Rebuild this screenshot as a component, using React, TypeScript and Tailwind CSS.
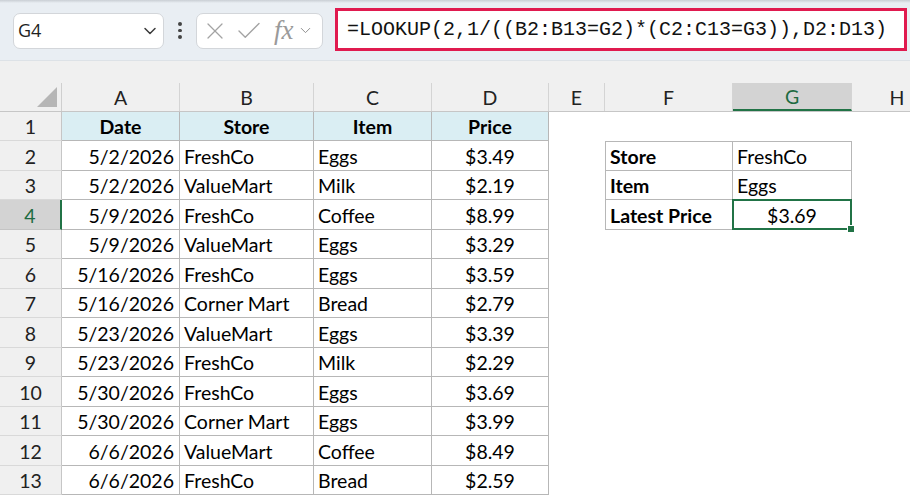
import React from "react";
import { ChevronDown, X, Check } from "lucide-react";

const COLS = [118, 134, 118, 117, 56, 128, 119, 90];
const LETTERS = ["A", "B", "C", "D", "E", "F", "G", "H"];

const DATA: string[][] = [
  ["5/2/2026", "FreshCo", "Eggs", "$3.49"],
  ["5/2/2026", "ValueMart", "Milk", "$2.19"],
  ["5/9/2026", "FreshCo", "Coffee", "$8.99"],
  ["5/9/2026", "ValueMart", "Eggs", "$3.29"],
  ["5/16/2026", "FreshCo", "Eggs", "$3.59"],
  ["5/16/2026", "Corner Mart", "Bread", "$2.79"],
  ["5/23/2026", "ValueMart", "Eggs", "$3.39"],
  ["5/23/2026", "FreshCo", "Milk", "$2.29"],
  ["5/30/2026", "FreshCo", "Eggs", "$3.69"],
  ["5/30/2026", "Corner Mart", "Eggs", "$3.99"],
  ["6/6/2026", "ValueMart", "Coffee", "$8.49"],
  ["6/6/2026", "FreshCo", "Bread", "$2.59"],
];

const LOOKUP: Record<number, [string, string]> = {
  2: ["Store", "FreshCo"],
  3: ["Item", "Eggs"],
  4: ["Latest Price", "$3.69"],
};

function rowHeight(r: number) {
  if (r === 1) return 29;
  return r % 2 === 0 ? 30 : 29;
}

function TopBar() {
  return (
    <div className="relative h-[61px] bg-[#e9eef3] border-b border-[#dde2e7]">
      <div className="absolute left-0 top-0 h-[3px] w-full bg-gradient-to-b from-[#c9ced4] to-[#e9eef3]" />
      <div className="flex h-full items-center pl-[13px] pt-[1px]">
        <div className="flex h-[36px] w-[151px] items-center justify-between rounded-[7px] border border-[#d3d6da] bg-white pl-[4px] pr-[3px]">
          <span className="text-[18px] text-[#1f1f1f]" style={{ fontFamily: "'Open Sans', sans-serif" }}>
            G4
          </span>
          <ChevronDown size={20} strokeWidth={1.8} className="text-[#3b3b3b]" />
        </div>
        <div className="flex w-[32px] flex-col items-center justify-center gap-[3px]">
          <span className="block h-[3.5px] w-[3.5px] rounded-full bg-[#444]" />
          <span className="block h-[3.5px] w-[3.5px] rounded-full bg-[#444]" />
          <span className="block h-[3.5px] w-[3.5px] rounded-full bg-[#444]" />
        </div>
        <div className="flex h-[36px] w-[127px] items-center rounded-[7px] border border-[#d3d6da] bg-white pl-[4px]">
          <X size={28} strokeWidth={1.1} className="text-[#a3a3a3]" />
          <Check size={30} strokeWidth={1.1} className="ml-[5px] text-[#a3a3a3]" />
          <span
            className="ml-[10px] text-[27px] italic leading-none text-[#9a9a9a]"
            style={{ fontFamily: "'Liberation Serif', serif" }}
          >
            fx
          </span>
          <ChevronDown size={17} strokeWidth={1.4} className="ml-[3px] text-[#8f8f8f]" />
        </div>
        <div className="ml-[12px] flex h-[43px] w-[572px] -translate-y-[1px] items-center border-[3px] border-[#e01a4f] bg-white pl-[9px]">
          <span
            className="text-[20px] text-[#111] whitespace-nowrap"
            style={{ fontFamily: "'Liberation Mono', monospace" }}
          >
            =LOOKUP(2,1/((B2:B13=G2)*(C2:C13=G3)),D2:D13)
          </span>
        </div>
      </div>
    </div>
  );
}

function ColumnHeader() {
  return (
    <div className="flex h-[29px] border-b border-[#c6c6c6] bg-[#f0f0f0]">
      <div className="relative w-[62px] shrink-0 border-r border-[#cfcfcf]">
        <svg className="absolute right-[4px] bottom-[4px]" width="20" height="20" viewBox="0 0 20 20">
          <polygon points="20,0 20,20 0,20" fill="#b6b6b6" />
        </svg>
      </div>
      {LETTERS.map((l, i) => {
        const sel = l === "G";
        return (
          <div
            key={l}
            style={{ width: COLS[i] }}
            className={
              "flex shrink-0 items-center justify-center pt-[1px] text-[19.5px] " +
              (i < LETTERS.length - 1 ? "border-r border-[#d4d4d4] " : "") +
              (sel ? "bg-[#d3d3d3] text-[#1e6b41] border-b-2 border-b-[#217346]" : "text-[#222]")
            }
          >
            {l}
          </div>
        );
      })}
    </div>
  );
}

const TB = "border-[#b7b7b7]";

function Row({ r }: { r: number }) {
  const h = rowHeight(r);
  const sel = r === 4;
  const d = r >= 2 ? DATA[r - 2] : null;
  const lk = LOOKUP[r];
  return (
    <div className="flex" style={{ height: h }}>
      <div
        className={
          "flex w-[62px] shrink-0 items-center justify-center border-b pt-[2px] text-[19.5px] " +
          (sel
            ? "bg-[#d3d3d3] text-[#1e6b41] border-b-[#c4c4c4] border-r-2 border-r-[#217346]"
            : "bg-[#f0f0f0] text-[#222] border-b-[#d9d9d9] border-r border-r-[#c6c6c6]")
        }
      >
        {r}
      </div>
      {r === 1 ? (
        ["Date", "Store", "Item", "Price"].map((t, i) => (
          <div
            key={t}
            style={{ width: COLS[i] }}
            className={"flex shrink-0 items-center justify-center border-r border-b bg-[#daeef3] pt-[2px] font-bold " + TB}
          >
            {t}
          </div>
        ))
      ) : (
        <>
          <div style={{ width: COLS[0] }} className={"flex shrink-0 items-center justify-end border-r border-b pt-[2px] pr-[5px] " + TB}>
            {d![0]}
          </div>
          <div style={{ width: COLS[1] }} className={"flex shrink-0 items-center border-r border-b pt-[2px] pl-[4px] " + TB}>
            {d![1]}
          </div>
          <div style={{ width: COLS[2] }} className={"flex shrink-0 items-center border-r border-b pt-[2px] pl-[4px] " + TB}>
            {d![2]}
          </div>
          <div style={{ width: COLS[3] }} className={"flex shrink-0 items-center justify-center border-r border-b pt-[2px] " + TB}>
            {d![3]}
          </div>
        </>
      )}
      <div style={{ width: COLS[4] }} className="shrink-0" />
      {lk ? (
        <>
          <div
            style={{ width: COLS[5] }}
            className={
              "flex shrink-0 items-center border-l border-r border-b pt-[2px] pl-[4px] font-bold " +
              (r === 2 ? "border-t " : "") +
              TB
            }
          >
            {lk[0]}
          </div>
          <div
            style={{ width: COLS[6] }}
            className={
              "relative flex shrink-0 items-center border-r border-b pt-[2px] " +
              (r === 2 ? "border-t " : "") +
              (r === 4 ? "justify-center " : "pl-[4px] ") +
              TB
            }
          >
            {lk[1]}
            {r === 4 && (
              <>
                <div className="absolute -left-[1px] -top-[1px] -right-[1px] -bottom-[1px] border-2 border-[#217346]" />
                <div className="absolute -right-[4px] -bottom-[4px] h-[8px] w-[8px] border border-white bg-[#217346]" />
              </>
            )}
          </div>
        </>
      ) : (
        <>
          <div style={{ width: COLS[5] }} className="shrink-0" />
          <div style={{ width: COLS[6] }} className="shrink-0" />
        </>
      )}
      <div style={{ width: COLS[7] }} className="shrink-0" />
    </div>
  );
}

export default function App() {
  return (
    <div
      className="h-[497px] w-[910px] overflow-hidden bg-white text-[19.5px] text-black"
      style={{ fontFamily: "Lato, 'Open Sans', sans-serif" }}
    >
      <TopBar />
      <div className="h-[22px] bg-[#f0f0f0]" />
      <ColumnHeader />
      {Array.from({ length: 13 }, (_, i) => (
        <Row key={i} r={i + 1} />
      ))}
    </div>
  );
}
